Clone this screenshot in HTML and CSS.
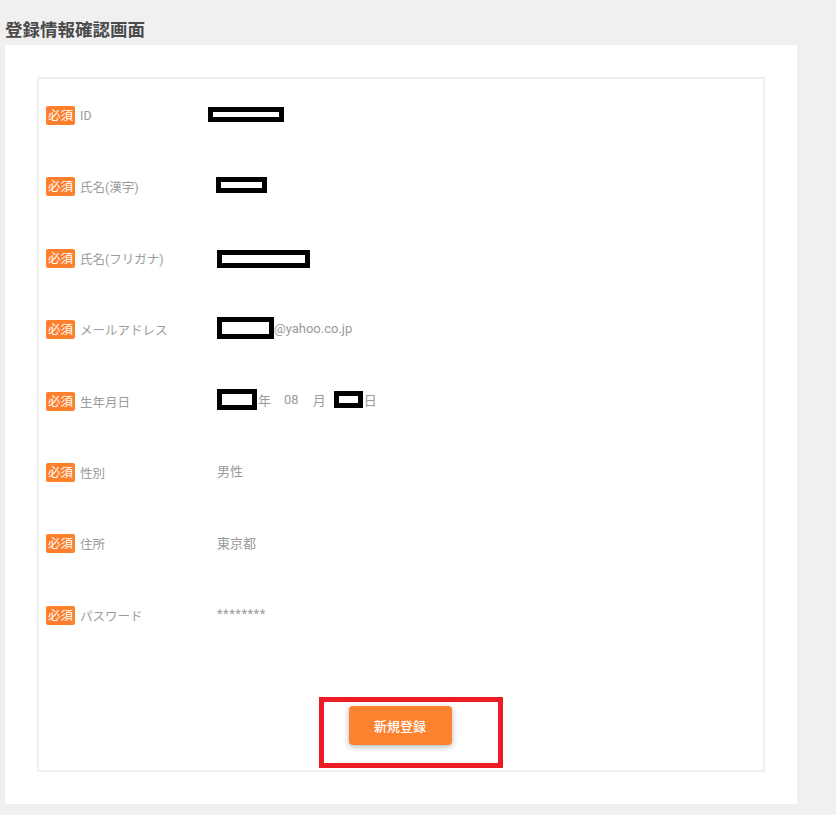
FILE: index.html
```html
<!DOCTYPE html>
<html lang="ja">
<head>
<meta charset="utf-8">
<title>登録情報確認画面</title>
<link rel="stylesheet" href="styles.css">
</head>
<body>
<div class="page">
  <h1 class="title">登録情報確認画面</h1>
  <div class="panel">
    <div class="box">
      <div class="row">
        <div class="label"><span class="badge">必須</span><span class="name">ID</span></div>
        <div class="value"><span class="redact r-id"></span></div>
      </div>
      <div class="row">
        <div class="label"><span class="badge">必須</span><span class="name">氏名(漢字)</span></div>
        <div class="value"><span class="redact r-name"></span></div>
      </div>
      <div class="row">
        <div class="label"><span class="badge">必須</span><span class="name">氏名(フリガナ)</span></div>
        <div class="value"><span class="redact r-kana"></span></div>
      </div>
      <div class="row">
        <div class="label"><span class="badge">必須</span><span class="name">メールアドレス</span></div>
        <div class="value"><span class="redact r-mail"></span><span>@yahoo.co.jp</span></div>
      </div>
      <div class="row">
        <div class="label"><span class="badge">必須</span><span class="name">生年月日</span></div>
        <div class="value"><span class="redact r-year"></span><span class="u-year">年</span><span class="u-month-num">08</span><span class="u-month">月</span><span class="redact r-day"></span><span>日</span></div>
      </div>
      <div class="row">
        <div class="label"><span class="badge">必須</span><span class="name">性別</span></div>
        <div class="value"><span>男性</span></div>
      </div>
      <div class="row">
        <div class="label"><span class="badge">必須</span><span class="name">住所</span></div>
        <div class="value"><span>東京都</span></div>
      </div>
      <div class="row">
        <div class="label"><span class="badge">必須</span><span class="name">パスワード</span></div>
        <div class="value"><span class="pw">********</span></div>
      </div>
      <div class="actions">
        <div class="btn-wrap">
          <button class="btn" type="button">新規登録</button>
          <span class="mark"></span>
        </div>
      </div>
    </div>
  </div>
</div>
</body>
</html>
```

FILE: styles.css
```css
html, body {
  margin: 0;
  padding: 0;
  background: #f0f0f0;
}
body {
  font-family: Roboto, "Noto Sans CJK JP", sans-serif;
  color: #999;
}
.page {
  padding: 20px 39px 0 5px;
}
.title {
  margin: 0 0 4px 0;
  font-size: 17.5px;
  line-height: 21px;
  font-weight: bold;
  color: #4a4a4a;
}
.panel {
  background: #fff;
  padding: 32px;
  width: 792px;
  box-sizing: border-box;
}
.box {
  border: 2px solid #efefef;
  padding: 27px 0 25px 0;
}
.row {
  display: flex;
  align-items: flex-start;
  height: 71.4px;
}
.label {
  width: 171px;
  padding-left: 7px;
  display: flex;
  align-items: center;
  height: 19px;
  font-size: 12.5px;
  color: #9b9b9b;
}
.name {
  font-size: 12.5px;
}
.badge {
  display: inline-block;
  height: 19px;
  line-height: 19px;
  padding: 0 2px;
  background: #fd7f2c;
  color: #fff;
  font-size: 12.5px;
  border-radius: 2px;
  margin-right: 5px;
}
.value {
  display: flex;
  align-items: center;
  height: 19px;
  margin-top: -1.5px;
  font-size: 13px;
  color: #9b9b9b;
}
.redact {
  display: inline-block;
  box-sizing: border-box;
  border: 5px solid #000;
  background: #fff;
}
.r-id { width: 76px; height: 15px; margin-left: -9px; }
.r-name { width: 51px; height: 16px; margin-left: -1px; }
.r-kana { width: 93px; height: 18px; margin-top: 4px; }
.r-mail { width: 57px; height: 22px; }
.r-year { width: 40px; height: 21px; margin-right: 1px; }
.r-day { width: 29px; height: 17px; margin-right: 1px; }
.u-year { margin-right: 13px; }
.u-month-num { margin-right: 14px; }
.u-month { margin-right: 8px; }
.pw {
  letter-spacing: 0.5px;
}
.actions {
  display: flex;
  justify-content: center;
  margin-top: 28.8px;
  padding-right: 2px;
}
.btn-wrap {
  position: relative;
}
.btn {
  display: block;
  width: 103px;
  height: 39px;
  border: none;
  border-radius: 4px;
  background: #fd8230;
  color: #fff;
  font-family: Roboto, "Noto Sans CJK JP", sans-serif;
  font-size: 13px;
  font-weight: 500;
  box-shadow: 0 2px 6px rgba(0, 0, 0, 0.28);
  cursor: pointer;
}
.mark {
  position: absolute;
  left: -30px;
  top: -9px;
  width: 184px;
  height: 71px;
  box-sizing: border-box;
  border: 5px solid #ed1c24;
}
```
